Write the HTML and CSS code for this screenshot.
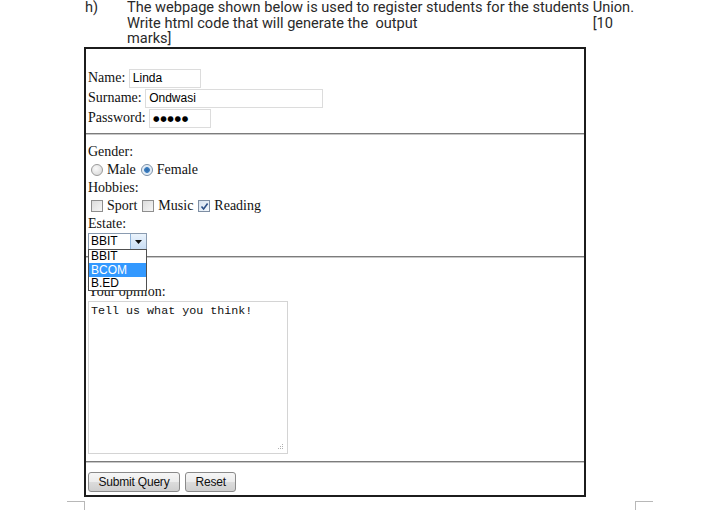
FILE: index.html
```html
<!DOCTYPE html>
<html>
<head>
<meta charset="utf-8">
<link rel="stylesheet" href="styles.css">
</head>
<body>
<div class="q">
  <div class="qnum">h)</div>
  <div class="qtext">
    <div>The webpage shown below is used to register students for the students Union.</div>
    <div class="qline2"><span>Write html code that will generate the&nbsp; output</span><span>[10</span></div>
    <div>marks]</div>
  </div>
</div>

<div class="frame">
  <div class="sec sec1">
    <div class="row">Name:&nbsp;<span class="inp w-name">Linda</span></div>
    <div class="row">Surname:&nbsp;<span class="inp w-sur">Ondwasi</span></div>
    <div class="row">Password:&nbsp;<span class="inp w-pw"><span class="dots">●●●●●</span></span></div>
  </div>
  <div class="hr"></div>
  <div class="sec sec2">
    <div class="line">Gender:</div>
    <div class="line opts">
      <span class="radio"></span><span class="lbl">Male</span>
      <span class="radio on"></span><span class="lbl">Female</span>
    </div>
    <div class="line">Hobbies:</div>
    <div class="line opts">
      <span class="check"></span><span class="lbl">Sport</span>
      <span class="check"></span><span class="lbl">Music</span>
      <span class="check on"><svg width="9" height="9" viewBox="0 0 9 9"><path d="M1.5 4.5 L3.6 7 L7.6 1.6" fill="none" stroke="#2b4f86" stroke-width="1.6"/></svg></span><span class="lbl">Reading</span>
    </div>
    <div class="line">Estate:</div>
    <div class="selwrap">
      <div class="select"><span class="seltext">BBIT</span><span class="selbtn"><svg width="7" height="4" viewBox="0 0 7 4"><path d="M0 0 H7 L3.5 4 Z" fill="#111"/></svg></span></div>
      <div class="droplist">
        <div class="opt">BBIT</div>
        <div class="opt sel">BCOM</div>
        <div class="opt">B.ED</div>
      </div>
    </div>
  </div>
  <div class="hr"></div>
  <div class="sec sec3">
    <div class="line">Your opinion:</div>
    <div class="textarea">Tell us what you think!<span class="grip"><svg width="6" height="6" viewBox="0 0 6 6"><g fill="#b0b0b0"><rect x="4" y="0" width="1" height="1"/><rect x="2" y="2" width="1" height="1"/><rect x="4" y="2" width="1" height="1"/><rect x="0" y="4" width="1" height="1"/><rect x="2" y="4" width="1" height="1"/><rect x="4" y="4" width="1" height="1"/></g></svg></span></div>
  </div>
  <div class="hr"></div>
  <div class="sec sec4">
    <span class="btn">Submit Query</span>
    <span class="btn">Reset</span>
  </div>
</div>

<div class="marks">
  <span class="mark-l"></span>
  <span class="mark-r"></span>
</div>
</body>
</html>
```

FILE: styles.css
```css
html, body {
  margin: 0;
  padding: 0;
  background: #fff;
}
body {
  width: 720px;
  height: 510px;
  overflow: hidden;
}
.q {
  display: flex;
  height: 47px;
  font-family: Roboto, "Liberation Sans", sans-serif;
  font-size: 14.6px;
  line-height: 15.5px;
  color: #2a2a2a;
}
.qnum {
  width: 42px;
  padding-left: 85px;
}
.qtext {
  width: 540px;
}
.qline2 {
  display: flex;
  justify-content: space-between;
  width: 486px;
}

.frame {
  margin-left: 84px;
  width: 502px;
  height: 450px;
  box-sizing: border-box;
  border: 2px solid #1c1c1c;
  font-family: "Liberation Serif", "Times New Roman", serif;
  font-size: 14px;
  color: #111;
}
.sec {
  padding-left: 2px;
}
.sec1 {
  padding-top: 19px;
  padding-bottom: 5px;
}
.row {
  display: flex;
  align-items: center;
  height: 20px;
  white-space: nowrap;
}
.inp {
  box-sizing: border-box;
  height: 19px;
  border: 1px solid #dcdcdc;
  font-family: "Liberation Sans", Arial, sans-serif;
  font-size: 12px;
  line-height: 17px;
  padding-left: 3px;
  color: #000;
}
.w-name { width: 72px; }
.w-sur { width: 178px; }
.w-pw { width: 62px; }
.dots {
  font-family: "DejaVu Sans", sans-serif;
  font-size: 7.5px;
  letter-spacing: 0.6px;
  vertical-align: top;
}
.hr {
  border-top: 1px solid #7c7c7c;
  border-bottom: 1px solid #c8c8c8;
}
.sec2 {
  padding-top: 8px;
  height: 113px;
}
.line {
  height: 18px;
  line-height: 18px;
  white-space: nowrap;
}
.opts {
  display: flex;
  align-items: center;
  padding-left: 3px;
}
.lbl {
  margin-left: 4px;
  margin-right: 5px;
}
.radio {
  width: 10px;
  height: 10px;
  border-radius: 50%;
  border: 1px solid #9a9a9a;
  background: radial-gradient(circle at 40% 35%, #fafafa, #d4d4d4);
  box-sizing: content-box;
}
.radio.on {
  background: radial-gradient(circle at 50% 50%, #2d6aa8 0, #3b7dc0 2.5px, #d8e6f3 3.2px, #eef4fa 5px);
  border-color: #7a8fa6;
}
.check {
  width: 10px;
  height: 10px;
  border: 1px solid #8e8e8e;
  background: linear-gradient(135deg, #dcdcdc, #f6f6f6);
  box-sizing: content-box;
  display: flex;
  align-items: center;
  justify-content: center;
}
.check.on {
  background: linear-gradient(135deg, #d6e2f0, #f4f8fc);
  border-color: #7e8ea3;
}
.selwrap {
  position: relative;
  width: 59px;
}
.select {
  box-sizing: border-box;
  height: 17px;
  width: 59px;
  border: 1px solid #8a9bb0;
  display: flex;
  align-items: stretch;
  font-family: "Liberation Sans", Arial, sans-serif;
  font-size: 12px;
  color: #000;
}
.seltext {
  flex: 1;
  line-height: 15px;
  padding-left: 2px;
}
.selbtn {
  width: 15px;
  border-left: 1px solid #8fb3d9;
  background: linear-gradient(#eaf3fc, #c9def5);
  display: flex;
  align-items: center;
  justify-content: center;
}
.droplist {
  position: absolute;
  top: 16px;
  left: 0;
  width: 59px;
  box-sizing: border-box;
  border: 1px solid #505050;
  background: #fff;
  font-family: "Liberation Sans", Arial, sans-serif;
  font-size: 12px;
  color: #000;
  z-index: 2;
}
.opt {
  height: 13px;
  line-height: 13px;
  padding-left: 2px;
}
.opt.sel {
  background: #3399ff;
  color: #fff;
  height: 14px;
  line-height: 14px;
}
.sec3 {
  padding-top: 25px;
  padding-bottom: 7px;
}
.sec3 .line {
  line-height: 17px;
  height: 18px;
}
.textarea {
  position: relative;
  box-sizing: border-box;
  width: 200px;
  height: 153px;
  border: 1px solid #d4d4d4;
  font-family: "Liberation Mono", "Courier New", monospace;
  font-size: 11.7px;
  line-height: 14px;
  padding: 2px 2px;
  color: #111;
}
.grip {
  position: absolute;
  right: 3px;
  bottom: 3px;
  display: flex;
}
.sec4 {
  padding-top: 9px;
  display: flex;
  gap: 5px;
  padding-left: 2px;
}
.btn {
  box-sizing: border-box;
  height: 20px;
  padding: 0 9.5px;
  border: 1px solid #8a8a8a;
  border-radius: 3px;
  background: linear-gradient(#f6f6f6 0, #ececec 50%, #dcdcdc 51%, #cfcfcf 100%);
  font-family: "Liberation Sans", Arial, sans-serif;
  font-size: 12px;
  line-height: 18px;
  color: #111;
  letter-spacing: -0.2px;
}
.marks {
  display: flex;
  margin-top: 4px;
}
.mark-l {
  width: 17px;
  height: 12px;
  margin-left: 67px;
  border-top: 1px solid #b8b8b8;
  border-right: 1px solid #b8b8b8;
}
.mark-r {
  width: 17px;
  height: 12px;
  margin-left: 550px;
  border-top: 1px solid #b8b8b8;
  border-left: 1px solid #b8b8b8;
}
```
